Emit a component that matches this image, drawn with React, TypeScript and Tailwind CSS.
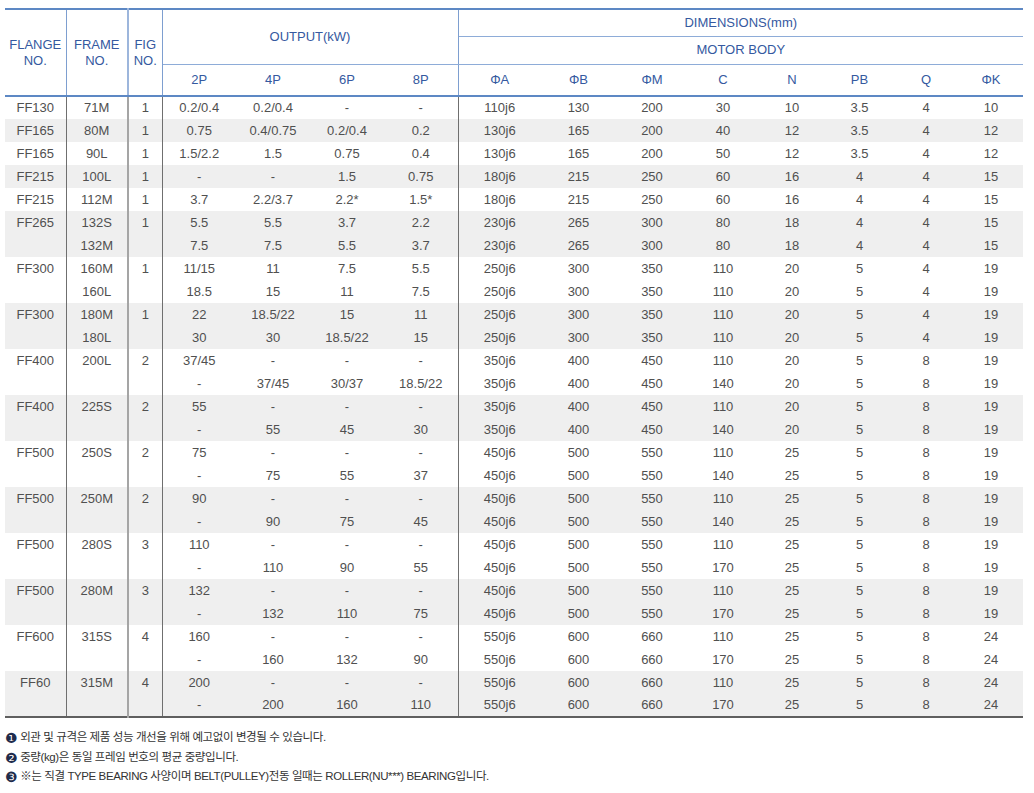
import type { ReactNode } from "react";

type Row = { flange?: string; frame?: string; fig?: string; out: string[]; dim: string[] };
type Group = Row[];

const dimCols = [83, 75, 72, 70, 68, 67, 66, 64];
const dimHeads = ["ΦA", "ΦB", "ΦM", "C", "N", "PB", "Q", "ΦK"];

const groups: Group[] = [
  [{ flange: "FF130", frame: "71M", fig: "1", out: ["0.2/0.4", "0.2/0.4", "-", "-"], dim: ["110j6", "130", "200", "30", "10", "3.5", "4", "10"] }],
  [{ flange: "FF165", frame: "80M", fig: "1", out: ["0.75", "0.4/0.75", "0.2/0.4", "0.2"], dim: ["130j6", "165", "200", "40", "12", "3.5", "4", "12"] }],
  [{ flange: "FF165", frame: "90L", fig: "1", out: ["1.5/2.2", "1.5", "0.75", "0.4"], dim: ["130j6", "165", "200", "50", "12", "3.5", "4", "12"] }],
  [{ flange: "FF215", frame: "100L", fig: "1", out: ["-", "-", "1.5", "0.75"], dim: ["180j6", "215", "250", "60", "16", "4", "4", "15"] }],
  [{ flange: "FF215", frame: "112M", fig: "1", out: ["3.7", "2.2/3.7", "2.2*", "1.5*"], dim: ["180j6", "215", "250", "60", "16", "4", "4", "15"] }],
  [
    { flange: "FF265", frame: "132S", fig: "1", out: ["5.5", "5.5", "3.7", "2.2"], dim: ["230j6", "265", "300", "80", "18", "4", "4", "15"] },
    { frame: "132M", out: ["7.5", "7.5", "5.5", "3.7"], dim: ["230j6", "265", "300", "80", "18", "4", "4", "15"] },
  ],
  [
    { flange: "FF300", frame: "160M", fig: "1", out: ["11/15", "11", "7.5", "5.5"], dim: ["250j6", "300", "350", "110", "20", "5", "4", "19"] },
    { frame: "160L", out: ["18.5", "15", "11", "7.5"], dim: ["250j6", "300", "350", "110", "20", "5", "4", "19"] },
  ],
  [
    { flange: "FF300", frame: "180M", fig: "1", out: ["22", "18.5/22", "15", "11"], dim: ["250j6", "300", "350", "110", "20", "5", "4", "19"] },
    { frame: "180L", out: ["30", "30", "18.5/22", "15"], dim: ["250j6", "300", "350", "110", "20", "5", "4", "19"] },
  ],
  [
    { flange: "FF400", frame: "200L", fig: "2", out: ["37/45", "-", "-", "-"], dim: ["350j6", "400", "450", "110", "20", "5", "8", "19"] },
    { out: ["-", "37/45", "30/37", "18.5/22"], dim: ["350j6", "400", "450", "140", "20", "5", "8", "19"] },
  ],
  [
    { flange: "FF400", frame: "225S", fig: "2", out: ["55", "-", "-", "-"], dim: ["350j6", "400", "450", "110", "20", "5", "8", "19"] },
    { out: ["-", "55", "45", "30"], dim: ["350j6", "400", "450", "140", "20", "5", "8", "19"] },
  ],
  [
    { flange: "FF500", frame: "250S", fig: "2", out: ["75", "-", "-", "-"], dim: ["450j6", "500", "550", "110", "25", "5", "8", "19"] },
    { out: ["-", "75", "55", "37"], dim: ["450j6", "500", "550", "140", "25", "5", "8", "19"] },
  ],
  [
    { flange: "FF500", frame: "250M", fig: "2", out: ["90", "-", "-", "-"], dim: ["450j6", "500", "550", "110", "25", "5", "8", "19"] },
    { out: ["-", "90", "75", "45"], dim: ["450j6", "500", "550", "140", "25", "5", "8", "19"] },
  ],
  [
    { flange: "FF500", frame: "280S", fig: "3", out: ["110", "-", "-", "-"], dim: ["450j6", "500", "550", "110", "25", "5", "8", "19"] },
    { out: ["-", "110", "90", "55"], dim: ["450j6", "500", "550", "170", "25", "5", "8", "19"] },
  ],
  [
    { flange: "FF500", frame: "280M", fig: "3", out: ["132", "-", "-", "-"], dim: ["450j6", "500", "550", "110", "25", "5", "8", "19"] },
    { out: ["-", "132", "110", "75"], dim: ["450j6", "500", "550", "170", "25", "5", "8", "19"] },
  ],
  [
    { flange: "FF600", frame: "315S", fig: "4", out: ["160", "-", "-", "-"], dim: ["550j6", "600", "660", "110", "25", "5", "8", "24"] },
    { out: ["-", "160", "132", "90"], dim: ["550j6", "600", "660", "170", "25", "5", "8", "24"] },
  ],
  [
    { flange: "FF60", frame: "315M", fig: "4", out: ["200", "-", "-", "-"], dim: ["550j6", "600", "660", "110", "25", "5", "8", "24"] },
    { out: ["-", "200", "160", "110"], dim: ["550j6", "600", "660", "170", "25", "5", "8", "24"] },
  ],
];

const notes: [string, ReactNode][] = [
  ["❶", "외관 및 규격은 제품 성능 개선을 위해 예고없이 변경될 수 있습니다."],
  ["❷", "중량(kg)은 동일 프레임 번호의 평균 중량입니다."],
  ["❸", "※는 직결 TYPE BEARING 사양이며 BELT(PULLEY)전동 일때는 ROLLER(NU***) BEARING입니다."],
];

export default function App() {
  return (
    <div className="min-h-[793px] w-[1034px] bg-white pl-[5px] pt-[8px] font-['Liberation_Sans',Arial,sans-serif] text-[13px]">
      <table className="w-[1018px] table-fixed border-collapse border-t-2 border-b-2 border-t-[#5d88c4] border-b-[#5f5f5f]">
        <colgroup>
          <col className="w-[61px]" />
          <col className="w-[62px]" />
          <col className="w-[34px]" />
          <col className="w-[74px]" />
          <col className="w-[74px]" />
          <col className="w-[74px]" />
          <col className="w-[74px]" />
          {dimCols.map((w, i) => (
            <col key={i} style={{ width: w }} />
          ))}
        </colgroup>
        <thead className="text-[#3559a0]">
          <tr className="h-[27px]">
            <th rowSpan={3} className="border-r border-b-2 border-r-[#7e9fd0] border-b-[#5d88c4] text-center font-normal leading-[16px]">
              FLANGE
              <br />
              NO.
            </th>
            <th rowSpan={3} className="border-r-2 border-b-2 border-r-[#9db6dc] border-b-[#5d88c4] text-center font-normal leading-[16px]">
              FRAME
              <br />
              NO.
            </th>
            <th rowSpan={3} className="border-r border-b-2 border-r-[#7e9fd0] border-b-[#5d88c4] text-center font-normal leading-[16px]">
              FIG
              <br />
              NO.
            </th>
            <th colSpan={4} rowSpan={2} className="border-r border-b border-r-[#7e9fd0] border-b-[#8eacd8] text-center font-normal">
              OUTPUT(kW)
            </th>
            <th colSpan={8} className="border-b border-b-[#8eacd8] text-center font-normal">
              DIMENSIONS(mm)
            </th>
          </tr>
          <tr className="h-[28px]">
            <th colSpan={8} className="border-b border-b-[#8eacd8] text-center font-normal">
              MOTOR BODY
            </th>
          </tr>
          <tr className="h-[32px]">
            {["2P", "4P", "6P", "8P"].map((p, i) => (
              <th
                key={p}
                className={`border-b-2 border-b-[#5d88c4] text-center font-normal ${i === 3 ? "border-r border-r-[#7e9fd0]" : ""}`}
              >
                {p}
              </th>
            ))}
            {dimHeads.map((h) => (
              <th key={h} className="border-b-2 border-b-[#5d88c4] text-center font-normal">
                {h}
              </th>
            ))}
          </tr>
        </thead>
        <tbody className="text-[#505050]">
          {groups.map((g, gi) =>
            g.map((r, ri) => (
              <tr key={`${gi}-${ri}`} className={`h-[23px] ${gi % 2 === 1 ? "bg-[#efefef]" : "bg-white"}`}>
                <td className="border-r border-r-[#6f6f6f] p-0 text-center">{r.flange ?? ""}</td>
                <td className="border-r-2 border-r-[#a5a5a5] p-0 text-center">{r.frame ?? ""}</td>
                <td className="border-r border-r-[#6f6f6f] p-0 text-center">{r.fig ?? ""}</td>
                {r.out.map((v, i) => (
                  <td key={i} className={`p-0 text-center ${i === 3 ? "border-r border-r-[#6f6f6f]" : ""}`}>
                    {v}
                  </td>
                ))}
                {r.dim.map((v, i) => (
                  <td key={i} className="p-0 text-center">
                    {v}
                  </td>
                ))}
              </tr>
            )),
          )}
        </tbody>
      </table>

      {/* footnotes */}
      <div className="mt-[12px] flex flex-col gap-[3.5px] font-['Liberation_Sans','Noto_Sans_CJK_KR',sans-serif] text-[11.5px] tracking-[-0.4px] text-[#333]">
        {notes.map(([n, t]) => (
          <div key={n} className="flex h-[16px] items-center gap-[3px]">
            <span className="font-['DejaVu_Sans',sans-serif] text-[14px] leading-none text-[#1f2c4c]">{n}</span>
            <span>{t}</span>
          </div>
        ))}
      </div>
    </div>
  );
}
